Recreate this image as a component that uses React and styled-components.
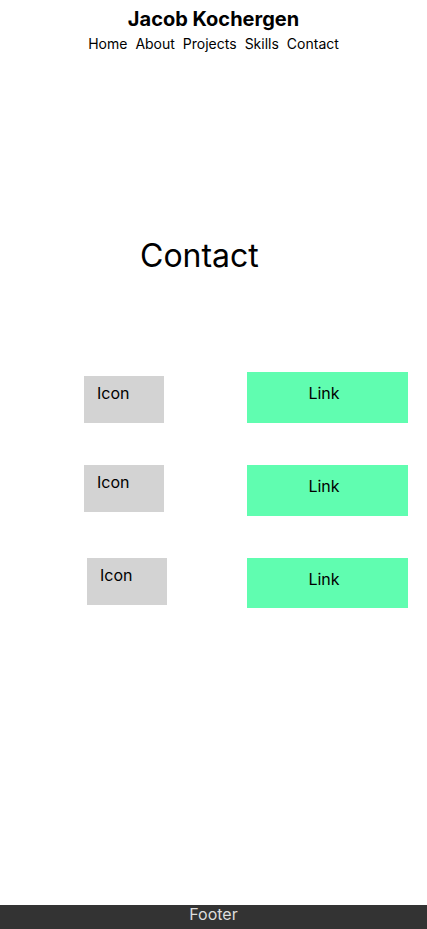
import React from "react";
import styled, { createGlobalStyle } from "styled-components";

const GlobalStyle = createGlobalStyle`
  html, body { margin: 0; padding: 0; background: #ffffff; }
  body { font-family: Inter, "Noto Sans", Arial, sans-serif; color: #000; }
  * { box-sizing: border-box; }
`;

const Page = styled.div`
  min-height: 100vh;
  display: flex;
  flex-direction: column;
`;

const Header = styled.header`
  display: flex;
  flex-direction: column;
  align-items: center;
  padding-top: 7px;
`;

const Title = styled.h1`
  margin: 0;
  font-size: 20px;
  line-height: 24px;
  font-weight: 700;
`;

const Nav = styled.nav`
  display: flex;
  gap: 8px;
  margin-top: 4px;
  font-size: 14px;
  line-height: 17px;
`;

const NavLink = styled.a`
  color: #000;
  text-decoration: none;
`;

const Main = styled.main`
  flex: 1;
  display: flex;
  flex-direction: column;
`;

const Heading = styled.h2`
  margin: 0;
  margin-top: 184px;
  padding-left: 140px;
  font-size: 32px;
  line-height: 39px;
  font-weight: 400;
`;

const ContactList = styled.div`
  display: flex;
  flex-direction: column;
  gap: 42px;
  margin-top: 97px;
`;

const Row = styled.div`
  display: grid;
  grid-template-columns: 247px 161px;
  align-items: start;
`;

const IconBox = styled.div`
  justify-self: start;
  width: 80px;
  height: 47px;
  margin-left: ${(p) => 84 + (p.$dx || 0)}px;
  margin-top: ${(p) => p.$dy || 0}px;
  padding: 8px 0 0 13px;
  background: #d3d3d3;
  font-size: 16px;
  line-height: 19px;
`;

const LinkBox = styled.a`
  height: ${(p) => p.$h || 51}px;
  padding: 12px 7px 0 0;
  background: #60fdb0;
  color: #000;
  text-decoration: none;
  text-align: center;
  font-size: 16px;
  line-height: 19px;
`;

const Footer = styled.footer`
  height: 24px;
  background: #333333;
  color: #dddddd;
  text-align: center;
  font-size: 16px;
  line-height: 19px;
`;

const contacts = [
  { dx: 0, dy: 4, h: 51 },
  { dx: 0, dy: 0, h: 51 },
  { dx: 3, dy: 0, h: 50 },
];

export default function App() {
  return (
    <>
      <GlobalStyle />
      <Page>
        <Header>
          <Title>Jacob Kochergen</Title>
          <Nav>
            <NavLink href="#">Home</NavLink>
            <NavLink href="#">About</NavLink>
            <NavLink href="#">Projects</NavLink>
            <NavLink href="#">Skills</NavLink>
            <NavLink href="#">Contact</NavLink>
          </Nav>
        </Header>
        <Main>
          <Heading>Contact</Heading>
          <ContactList>
            {contacts.map((c, i) => (
              <Row key={i}>
                <IconBox $dx={c.dx} $dy={c.dy}>Icon</IconBox>
                <LinkBox href="#" $h={c.h}>Link</LinkBox>
              </Row>
            ))}
          </ContactList>
        </Main>
        <Footer>Footer</Footer>
      </Page>
    </>
  );
}
